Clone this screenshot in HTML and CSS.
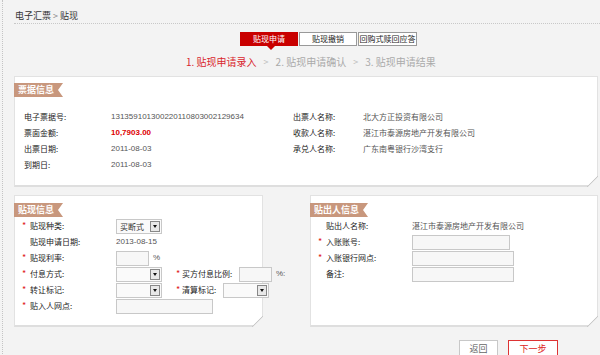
FILE: index.html
```html
<!DOCTYPE html>
<html>
<head>
<meta charset="utf-8">
<link rel="stylesheet" href="styles.css">
</head>
<body>
<div class="page">
  <div class="crumb">电子汇票 <span class="sep">&gt;</span> 贴现</div>
  <div class="tabs">
    <div class="tab active">贴现申请</div>
    <div class="tab">贴现撤销</div>
    <div class="tab">回购式赎回应答</div>
  </div>
  <div class="steps">
    <span class="cur">1. 贴现申请录入</span><span class="arr">&gt;</span><span>2. 贴现申请确认</span><span class="arr">&gt;</span><span>3. 贴现申请结果</span>
  </div>

  <div class="panel p1">
    <div class="badge">票据信息</div>
    <div class="info">
      <div class="col">
        <div class="row"><span class="lbl">电子票据号:</span><span class="val num">131359101300220110803002129634</span></div>
        <div class="row"><span class="lbl">票面金额:</span><span class="val amount">10,7903.00</span></div>
        <div class="row"><span class="lbl">出票日期:</span><span class="val num">2011-08-03</span></div>
        <div class="row"><span class="lbl">到期日:</span><span class="val num">2011-08-03</span></div>
      </div>
      <div class="col col2">
        <div class="row"><span class="lbl">出票人名称:</span><span class="val">北大方正投资有限公司</span></div>
        <div class="row"><span class="lbl">收款人名称:</span><span class="val">湛江市泰源房地产开发有限公司</span></div>
        <div class="row"><span class="lbl">承兑人名称:</span><span class="val">广东南粤银行沙湾支行</span></div>
      </div>
    </div>
  </div>

  <div class="pair">
    <div class="panel p2">
      <div class="badge">贴现信息</div>
      <div class="form">
        <div class="frow"><span class="req">*</span><span class="flbl">贴现种类:</span><div class="sel w46"><span class="st">买断式</span><i class="dd"></i></div></div>
        <div class="frow"><span class="req"></span><span class="flbl">贴现申请日期:</span><span class="val num">2013-08-15</span></div>
        <div class="frow"><span class="req">*</span><span class="flbl">贴现利率:</span><div class="inp w33"></div><span class="unit">%</span></div>
        <div class="frow"><span class="req">*</span><span class="flbl">付息方式:</span><div class="sel w46"><i class="dd"></i></div><span class="req r2">*</span><span class="flbl2">买方付息比例:</span><div class="inp w33"></div><span class="unit">%:</span></div>
        <div class="frow"><span class="req">*</span><span class="flbl">转让标记:</span><div class="sel w46"><i class="dd"></i></div><span class="req r2">*</span><span class="flbl3">清算标记:</span><div class="sel w46"><i class="dd"></i></div></div>
        <div class="frow"><span class="req">*</span><span class="flbl">贴入人网点:</span><div class="inp w96"></div></div>
      </div>
    </div>
    <div class="panel p3">
      <div class="badge">贴出人信息</div>
      <div class="form">
        <div class="frow"><span class="req"></span><span class="flbl4">贴出人名称:</span><span class="val">湛江市泰源房地产开发有限公司</span></div>
        <div class="frow"><span class="req">*</span><span class="flbl4">入账账号:</span><div class="inp w97"></div></div>
        <div class="frow"><span class="req">*</span><span class="flbl4">入账银行网点:</span><div class="inp w101"></div></div>
        <div class="frow"><span class="req"></span><span class="flbl4">备注:</span><div class="inp w101"></div></div>
      </div>
    </div>
  </div>

  <div class="actions">
    <div class="btn">返回</div>
    <div class="btn primary">下一步</div>
  </div>
</div>
</body>
</html>
```

FILE: styles.css
```css
html, body {
  margin: 0;
  padding: 0;
  background: #f3f3f3;
}
body {
  font-family: "Noto Sans CJK SC", "Liberation Sans", sans-serif;
  font-size: 8px;
  color: #222;
  width: 600px;
  height: 355px;
  overflow: hidden;
}
.page {
  margin-left: 2px;
  border-left: 1px dotted #c4c4c4;
  padding-left: 11px;
  padding-right: 3px;
  height: 400px;
}
.crumb {
  height: 23px;
  line-height: 31px;
  font-size: 9px;
  color: #333;
  padding-left: 1px;
  border-bottom: 1px dotted #c8c8c8;
  margin-right: -3px;
}
.crumb .sep { color: #888; }
.tabs {
  display: flex;
  margin-top: 8px;
  padding-left: 226px;
  height: 14px;
}
.tab {
  width: 56px;
  height: 12px;
  line-height: 12px;
  font-size: 8px;
  text-align: center;
  background: #fff;
  border: 1px solid #999;
  color: #222;
  margin-right: 1px;
  position: relative;
  white-space: nowrap;
}
.tab:nth-child(3) { width: 57px; }
.tab.active {
  background: #c90000;
  border-color: #c90000;
  color: #fff;
}
.tab.active::after {
  content: "";
  position: absolute;
  left: 26px;
  bottom: -5px;
  border-left: 4px solid transparent;
  border-right: 4px solid transparent;
  border-top: 4px solid #c90000;
}
.steps {
  margin-top: 9px;
  padding-left: 172px;
  height: 14px;
  line-height: 14px;
  color: #aaa;
  font-size: 10px;
  display: flex;
}
.steps .cur { color: #d9262c; }
.steps .arr { margin: 0 7px; color: #bbb; font-size: 9px; }

.panel {
  background: #fff;
  border: 1px solid #e2e2e2;
  border-bottom: 2px solid #dedede;
  position: relative;
  box-sizing: border-box;
}
.panel::after {
  content: "";
  position: absolute;
  right: -1px;
  bottom: -2px;
  width: 11px;
  height: 11px;
  background: linear-gradient(135deg, transparent 0, transparent 45%, #c9c9c9 50%, #f3f3f3 56%, #f3f3f3 100%);
}
.p1 {
  margin-top: 7px;
  height: 111px;
  width: 584px;
}
.badge {
  display: inline-block;
  margin-top: 6px;
  margin-left: -1px;
  height: 14px;
  line-height: 14px;
  padding: 0 9px 0 4px;
  background: #c8977d;
  color: #fff;
  font-weight: bold;
  font-size: 9px;
  clip-path: polygon(0 0, 100% 0, calc(100% - 5px) 50%, 100% 100%, 0 100%);
}
.info {
  display: flex;
  margin-top: 12px;
  padding-left: 9px;
}
.col { width: 269px; }
.row {
  display: flex;
  align-items: center;
  height: 16px;
  line-height: 16px;
  white-space: nowrap;
}
.col .lbl { width: 87px; color: #222; font-size: 8px; flex: none; }
.col2 .lbl { width: 70px; }
.val { color: #555; font-size: 8px; white-space: nowrap; }
.num { font-family: "Liberation Sans", sans-serif; font-size: 8px; }
.amount {
  font-family: "Liberation Sans", sans-serif;
  color: #d00;
  font-weight: bold;
  font-size: 8px;
}

.pair {
  display: flex;
  justify-content: space-between;
  margin-top: 8px;
  width: 584px;
}
.p2 { width: 249px; height: 132px; }
.p3 { width: 288px; height: 132px; }
.p2 .badge, .p3 .badge { margin-top: 7px; }
.form { margin-top: 1px; padding-left: 7px; }
.frow {
  display: flex;
  align-items: center;
  height: 16px;
  line-height: 16px;
  font-size: 8px;
  white-space: nowrap;
}
.req {
  width: 8px;
  color: #e02020;
  font-size: 9px;
  line-height: 16px;
  flex: none;
}
.r2 { margin-left: 14px; width: 6px; }
.flbl { width: 86px; flex: none; }
.flbl2 { width: 57px; flex: none; }
.flbl3 { width: 41px; flex: none; }
.flbl4 { width: 86px; flex: none; }
.sel {
  height: 13px;
  border: 1px solid #c8c8c8;
  background: #fafafa;
  position: relative;
  display: flex;
  align-items: center;
  color: #333;
  flex: none;
}
.sel .st { padding-left: 3px; font-size: 8px; line-height: 13px; }
.sel .dd {
  position: absolute;
  right: 1px;
  top: 1px;
  width: 8px;
  height: 9px;
  border: 1px solid #888;
  background: #e8e8e8;
}
.sel .dd::after {
  content: "";
  position: absolute;
  left: 1.5px;
  top: 3px;
  border-left: 2.5px solid transparent;
  border-right: 2.5px solid transparent;
  border-top: 3px solid #111;
}
.w46 { width: 44px; }
.inp {
  height: 13px;
  border: 1px solid #c8c8c8;
  background: #f7f7f7;
  flex: none;
}
.w33 { width: 31px; }
.w96 { width: 95px; }
.w97 { width: 96px; }
.w101 { width: 100px; }
.unit { color: #555; margin-left: 4px; font-size: 8px; font-family: "Liberation Sans", sans-serif; }

.actions {
  display: flex;
  justify-content: flex-end;
  gap: 10px;
  margin-top: 13px;
  padding-right: 39px;
}
.btn {
  width: 37px;
  height: 20px;
  line-height: 16px;
  text-align: center;
  border: 1px solid #c8c8c8;
  background: #fff;
  color: #666;
  font-size: 9px;
}
.btn.primary {
  width: 48px;
  border-color: #d33;
  color: #d22;
}
```
